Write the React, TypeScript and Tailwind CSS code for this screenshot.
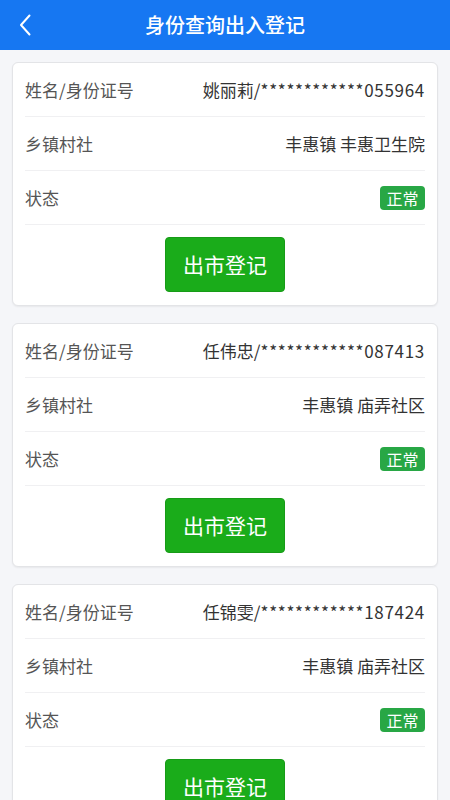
const records = [
  { name: "姚丽莉", id: "************055964", area: "丰惠镇 丰惠卫生院" },
  { name: "任伟忠", id: "************087413", area: "丰惠镇 庙弄社区" },
  { name: "任锦雯", id: "************187424", area: "丰惠镇 庙弄社区" },
];

export default function App() {
  return (
    <main
      className="min-h-screen bg-[#f5f6f9] text-[#333333]"
      style={{ fontFamily: '"Noto Sans CJK SC", "Noto Sans", sans-serif' }}
    >
      {/* HEADER */}
      <header className="h-[50px] bg-[#1677f2] flex items-center relative">
        <button className="absolute left-[16px] top-[12px] w-[18px] h-[26px] flex items-center justify-center">
          <svg width="14" height="24" viewBox="0 0 14 24" fill="none">
            <path d="M11.5 2.5L3 12l8.5 9.5" stroke="white" strokeWidth="2" strokeLinecap="round" strokeLinejoin="round" />
          </svg>
        </button>
        <h1 className="w-full text-center text-white text-[20px] font-medium leading-none">
          身份查询出入登记
        </h1>
      </header>

      {/* LIST */}
      <section className="px-[12px] pt-[12px] flex flex-col gap-[17px]">
        {records.map((r) => (
          <div
            key={r.id}
            className="bg-white rounded-[6px] border border-[#e3e4e7] shadow-[0_1px_2px_rgba(0,0,0,0.06)] px-[12px]"
          >
            <div className="h-[54px] flex items-center justify-between border-b border-[#f0f0f2] text-[17px]">
              <span className="text-[#555555]">姓名/身份证号</span>
              <span className="text-[#333333]">
                {r.name}/<span className="tracking-[0.7px]">{r.id}</span>
              </span>
            </div>
            <div className="h-[54px] flex items-center justify-between border-b border-[#f0f0f2] text-[17px]">
              <span className="text-[#555555]">乡镇村社</span>
              <span className="text-[#333333]">{r.area}</span>
            </div>
            <div className="h-[54px] flex items-center justify-between border-b border-[#f0f0f2] text-[17px]">
              <span className="text-[#555555]">状态</span>
              <span className="h-[24px] w-[45px] rounded-[4px] bg-[#28a745] text-white text-[16px] flex items-center justify-center leading-none">
                正常
              </span>
            </div>
            <div className="flex justify-center pt-[12px] pb-[13px]">
              <button className="w-[120px] h-[55px] rounded-[4px] bg-[#1aac1a] text-white text-[21px] leading-none border border-[#179b17]">
                出市登记
              </button>
            </div>
          </div>
        ))}
      </section>
    </main>
  );
}
